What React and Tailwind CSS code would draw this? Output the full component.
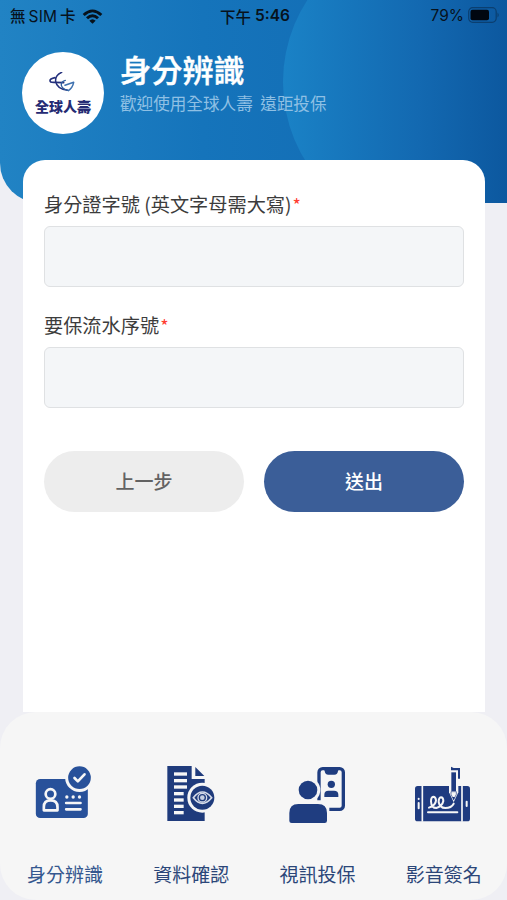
import { useState } from 'react';

function WifiIcon() {
  return (
    <svg width="21" height="15" viewBox="0 0 63 45" fill="#07121c">
      <path d="M2 15 Q31.500 -12 61 15 L55 21 Q31.500 -1 8 21 Z" />
      <path d="M12 25 Q31.500 7 51 25 L45 31 Q31.500 19 18 31 Z" />
      <path d="M22 35 Q31.500 26 41 35 L31.500 44 Z" />
    </svg>
  );
}

function StatusBar() {
  return (
    <div className="grid h-[30px] grid-cols-3 items-center pl-[10px] pr-[7px] text-[16px] leading-[30px] text-[#07121c]">
      <div className="flex items-center gap-[6px]">
        <span className="whitespace-nowrap text-[15.500px] font-medium tracking-[0.1px]">
          無<span className="mx-[3px] font-[Inter,sans-serif] text-[15.500px] font-normal">SIM</span>卡
        </span>
        <WifiIcon />
      </div>
      <div className="flex h-[28px] items-center justify-center gap-[4px] whitespace-nowrap font-bold leading-[28px]">
        <span className="text-[15.500px] font-medium">下午</span>
        <span className="font-[Inter,sans-serif] text-[15.500px] font-semibold">5:46</span>
      </div>
      <div className="flex items-center justify-end gap-1">
        <span className="font-[Inter,sans-serif] text-[15.500px]">79%</span>
        <svg width="32" height="16" viewBox="0 0 32 16" className="-mt-[2px]">
          <rect x="0.700" y="0.700" width="27.500" height="14.600" rx="4" fill="none" stroke="#0b3f70" strokeWidth="1.200" />
          <rect x="2.500" y="2.700" width="18.500" height="10.600" rx="2" fill="#000610" />
          <path d="M29.500 5.500 Q32 8 29.500 10.500 Z" fill="#0b3f70" />
        </svg>
      </div>
    </div>
  );
}

function Logo() {
  return (
    <div className="flex h-[82px] w-[82px] shrink-0 flex-col items-center rounded-full bg-white pt-[20px]">
      <svg width="32" height="24" viewBox="0 0 96 72" fill="none" stroke="#24307c" className="shrink-0" strokeLinecap="round">
        <path d="M44 1 Q24 10 26 28 Q29 50 62 55" strokeWidth="4.500" />
        <path d="M24 17 Q9 20 9 26 Q9 31 20 31 L50 32" strokeWidth="5" />
        <path d="M55 25 Q41 29 43 40 Q46 51 62 55" stroke="#2f5f9f" strokeWidth="4" />
        <path d="M54 40 L80 31 Q77 47 64 56" stroke="#3f72b0" strokeWidth="4.500" strokeLinejoin="round" />
      </svg>
      <span className="whitespace-nowrap text-[14px] font-black leading-[20px] text-[#252b73]">全球人壽</span>
    </div>
  );
}

function Header() {
  return (
    <header className="relative h-[203px] overflow-hidden rounded-bl-[40px] bg-linear-to-r from-[#2183c4] via-[#1574bb] via-40% to-[#1268b0]">
      {/* Sağdaki dekoratif daire */}
      <div className="absolute left-[283px] top-[-68px] h-[300px] w-[300px] rounded-full bg-linear-to-r from-[#1a82c6] via-[#1369b1] via-45% to-[#0b559c] to-80%" />
      <div className="relative">
        <StatusBar />
        <div className="flex gap-[16px] pl-[22px] pt-[22px]">
          <Logo />
          <div>
            <h1 className="-mt-[2px] text-[31.200px] font-medium leading-[38px] text-white [-webkit-text-stroke:0.4px_white]">身分辨識</h1>
            <p className="mt-[5px] whitespace-pre text-[16.600px] leading-[20px] text-[#8fc0e4]">歡迎使用全球人壽  遠距投保</p>
          </div>
        </div>
      </div>
    </header>
  );
}

function Field({ label, value, onChange }) {
  return (
    <label className="block">
      <span className="flex h-[28px] items-center text-[19.200px] leading-[28px] text-[#3c3c3c]">
        {label}
        <span className="ml-[1px] text-[18px] leading-[20px] text-[#ff3b30]">*</span>
      </span>
      <input
        value={value}
        onChange={(e) => onChange(e.target.value)}
        className="mt-[8px] block h-[61px] w-full rounded-[6px] border border-[#dfe1e3] bg-[#f4f6f8] px-4 text-[19px] outline-none"
      />
    </label>
  );
}

function IdCardIcon() {
  return (
    <svg width="75" height="80" viewBox="7.500 0 225 240" fill="#28519a">
      <rect x="31" y="72" width="156" height="117" rx="13" />
      <circle cx="162" cy="68" r="43" fill="#f6f6f6" />
      <circle cx="162" cy="68" r="34" />
      <path d="M147 69 L157 79 L177 58" fill="none" stroke="#f6f6f6" strokeWidth="8" strokeLinecap="round" strokeLinejoin="round" />
      <g fill="none" stroke="#f6f6f6" strokeWidth="8">
        <circle cx="75" cy="117" r="14.500" />
        <path d="M55 166 V156 Q55 136 75 136 Q96 136 96 156 V166 Z" strokeLinejoin="round" />
        <path d="M122 144 H165 M122 163 H165" strokeLinecap="round" />
      </g>
      <g fill="#f6f6f6">
        <circle cx="124" cy="126" r="5" />
        <circle cx="143" cy="126" r="5" />
        <circle cx="162" cy="126" r="5" />
      </g>
    </svg>
  );
}

function DocumentIcon() {
  return (
    <svg width="75" height="80" viewBox="-4 0 225 240" fill="#1f3b7c">
      <path d="M36 33 H109 V72 H148 V198 H36 Z" />
      <path d="M120 36 L147 63 H120 Z" />
      <g fill="#f6f6f6">
        <rect x="56" y="52" width="39" height="10" />
        <rect x="56" y="72" width="39" height="10" />
        <rect x="56" y="91" width="39" height="10" />
        <rect x="56" y="111" width="29" height="10" />
        <rect x="56" y="130" width="29" height="10" />
        <rect x="56" y="149" width="29" height="10" />
        <rect x="56" y="168" width="29" height="10" />
      </g>
      <circle cx="141" cy="128" r="45" fill="#f6f6f6" />
      <circle cx="141" cy="128" r="36" />
      <g fill="none" stroke="#d5dbe9" strokeWidth="5">
        <path d="M114 128 Q141 94 169 128 Q141 162 114 128 Z" />
        <circle cx="141" cy="128" r="13" strokeWidth="4" />
      </g>
      <circle cx="141" cy="128" r="7" fill="#c7d0e2" />
    </svg>
  );
}

function VideoCallIcon() {
  return (
    <svg width="75" height="80" viewBox="0 0 225 240" fill="#1f3d80">
      <rect x="117" y="41" width="73" height="122" rx="11" fill="none" stroke="#1f3d80" strokeWidth="10" />
      <path d="M130 40 H178 L174 48 Q173 59 163 59 H145 Q135 59 134 48 Z" />
      <path d="M104 136 H126 V148 H148 V172 H104 Z" fill="#f6f6f6" />
      <circle cx="154" cy="88" r="11" />
      <path d="M133 126 V119 Q133 107 145 107 H162 Q175 107 175 119 V126 Z" />
      <circle cx="84" cy="105" r="37" fill="#f6f6f6" />
      <circle cx="84" cy="105" r="28" />
      <path d="M28 204 V174 Q28 147 55 147 H114 Q141 147 141 174 V197 Q141 204 134 204 H35 Q28 204 28 198 Z" />
    </svg>
  );
}

function SignatureIcon() {
  return (
    <svg width="75" height="80" viewBox="3 0 225 240" fill="#1f3b80">
      <rect x="30" y="93" width="165" height="106" rx="8" />
      <path d="M52 92 V200 M171 92 V200" stroke="#f6f6f6" strokeWidth="5" />
      <g fill="none" stroke="#f6f6f6" strokeLinecap="round">
        <path d="M41 131 V132 M41 144 V160" strokeWidth="6" />
        <path d="M185 140 V153" strokeWidth="6" />
        <path
          d="M72 158 Q92 151 93 136 Q92 125 85 125 Q78 126 78 139 Q79 159 94 159 Q112 153 115 138 Q115 127 108 127 Q101 128 101 141 Q104 159 121 159 Q139 159 146 146"
          strokeWidth="6"
        />
        <path d="M69 172 H157" strokeWidth="6" />
      </g>
      <path d="M132 50 H160 V112 L146 142 L132 112 Z" fill="#f6f6f6" />
      <path d="M139 52 H153 V108 H139 Z" />
      <path d="M138 35 L146 39 H165 V71 H159 V46 H138 Z" />
      <path d="M138 110 H154 V118 L146 134 L138 118 Z" fill="#f6f6f6" stroke="#1f3b80" strokeWidth="2" />
      <path d="M142 126 H150 L146 136 Z" />
    </svg>
  );
}

const NAV_ITEMS = [
  { label: '身分辨識', Icon: IdCardIcon, color: 'text-[#35588f]' },
  { label: '資料確認', Icon: DocumentIcon, color: 'text-[#2b4679]' },
  { label: '視訊投保', Icon: VideoCallIcon, color: 'text-[#2b4679]' },
  { label: '影音簽名', Icon: SignatureIcon, color: 'text-[#2b4679]' },
];

function BottomNav() {
  return (
    <nav className="grid h-[188px] grid-cols-4 rounded-[36px] bg-[#f6f6f6] pl-[2px] pt-[43px]">
      {NAV_ITEMS.map(({ label, Icon, color }) => (
        <button key={label} type="button" className="flex flex-col items-center">
          <Icon />
          <span className={`mt-[25px] text-[19px] leading-[28px] ${color}`}>{label}</span>
        </button>
      ))}
    </nav>
  );
}

export default function App() {
  const [idNumber, setIdNumber] = useState('');
  const [serial, setSerial] = useState('');

  return (
    <div lang="zh-Hant" className="flex h-[900px] w-[507px] flex-col overflow-hidden bg-[#efeff4] font-['Noto_Sans_CJK_TC',sans-serif]">
      <Header />
      {/* Form kartı başlığın üzerine biner */}
      <main className="relative -mt-[43px] ml-[23px] mr-[22px] flex-1 rounded-t-[22px] bg-white px-[21px] pt-[30px]">
        <Field label="身分證字號 (英文字母需大寫)" value={idNumber} onChange={setIdNumber} />
        <div className="mt-[24px]">
          <Field label="要保流水序號" value={serial} onChange={setSerial} />
        </div>
        <div className="mt-[43px] grid grid-cols-2 gap-[20px] text-[19px] font-medium">
          <button type="button" className="h-[61px] rounded-full bg-[#ededed] text-[#626262]">上一步</button>
          <button type="button" className="h-[61px] rounded-full bg-[#3b5e98] text-white">送出</button>
        </div>
      </main>
      <BottomNav />
    </div>
  );
}
